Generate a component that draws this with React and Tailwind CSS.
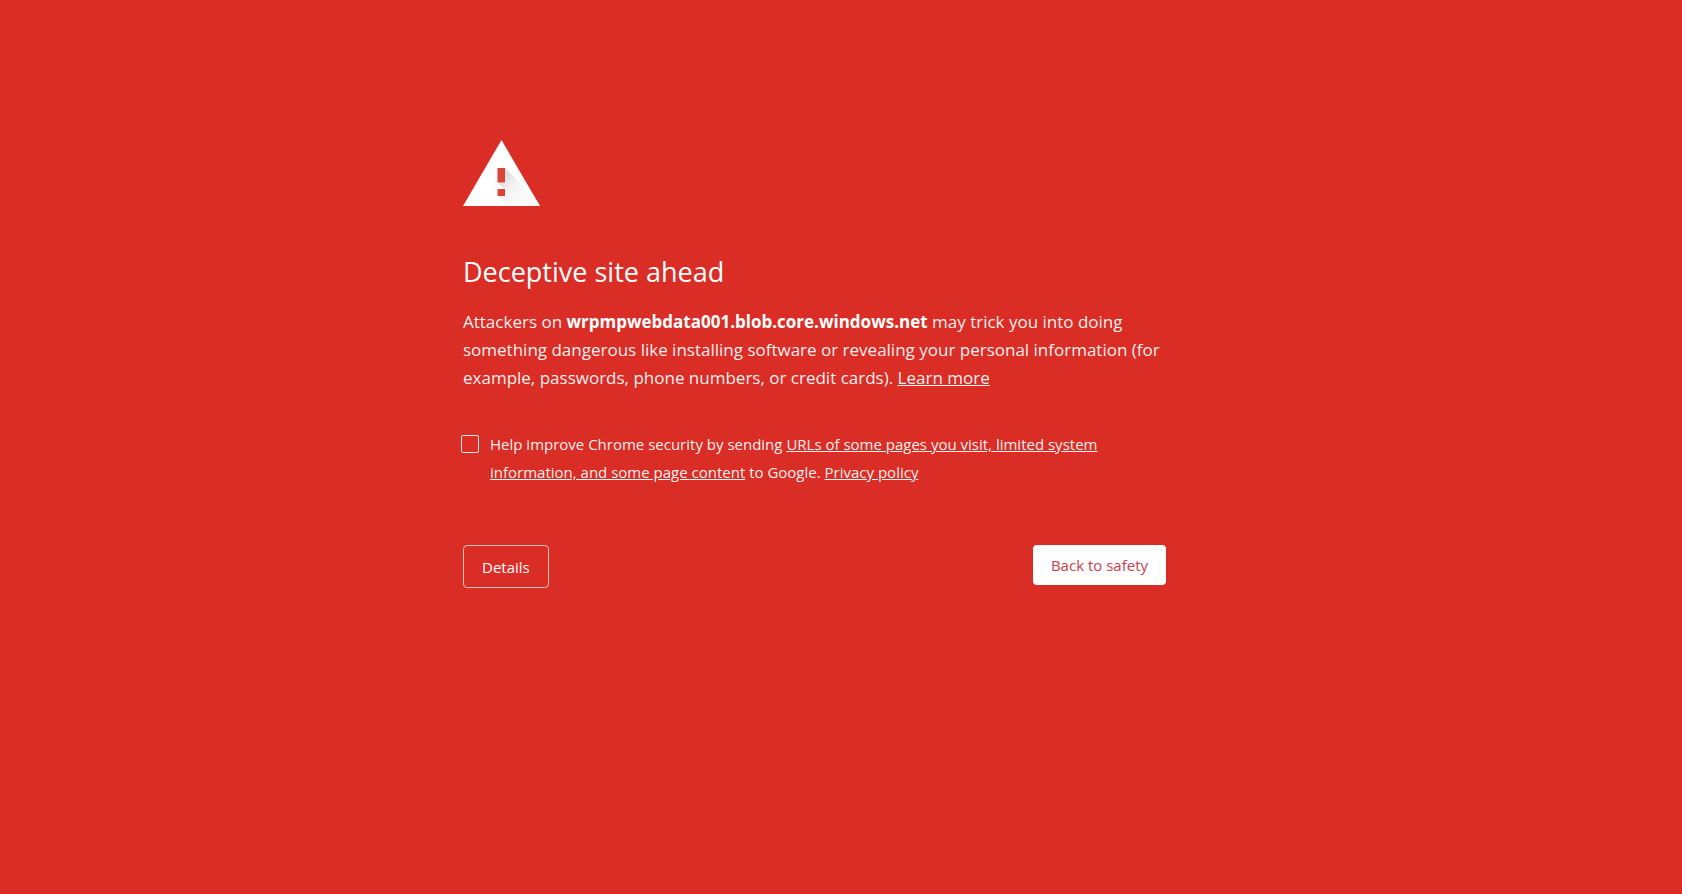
function WarningIcon() {
  return (
    <svg
      className="block h-[66px] w-[77px]"
      viewBox="0 0 77 66"
      aria-hidden="true"
    >
      <defs>
        <linearGradient id="shadow" x1="38" y1="34" x2="58" y2="54" gradientUnits="userSpaceOnUse">
          <stop offset="0" stopColor="#dadada" />
          <stop offset="0.6" stopColor="#f3f3f3" />
          <stop offset="1" stopColor="#fafafa" />
        </linearGradient>
      </defs>
      <path d="M38.5 0 77 66H0z" fill="#fff" />
      <path
        d="M42 28 72 58 77 66H44.500L34.500 56H42V49H41L34.500 42.500H42z"
        fill="url(#shadow)"
      />
      <path d="M34.500 28H42v14.500h-7.500zM34.500 49H42v7h-7.500z" fill="#db4437" />
    </svg>
  );
}

export default function App() {
  return (
    <div className="min-h-screen bg-[#da2d26] font-['Open_Sans','Noto_Sans',sans-serif] text-white">
      <main className="mx-auto max-w-[756px] pt-[140px] pr-[53px]">
        <WarningIcon />

        <h1 className="mt-12 text-[27px] leading-9">
          Deceptive site ahead
        </h1>

        <p className="mt-[18px] text-[17px] leading-7 text-white/95">
          Attackers on{" "}
          <strong className="font-bold text-white">
            wrpmpwebdata001.blob.core.windows.net
          </strong>{" "}
          may trick you into doing something dangerous like installing software
          or revealing your personal information (for example, passwords, phone
          numbers, or credit cards).{" "}
          <a href="#learn-more" className="underline">
            Learn more
          </a>
        </p>

        {/* REPORTING OPT-IN */}
        <div className="mt-[38px] flex gap-[11px] pr-[60px]">
          <input
            id="opt-in"
            type="checkbox"
            className="mt-[5px] -ml-0.5 size-[18px] shrink-0 appearance-none rounded-xs border border-white/90 checked:bg-white"
          />
          <label htmlFor="opt-in" className="text-[15px] leading-7 text-white/95">
            Help improve Chrome security by sending{" "}
            <a href="#whitepaper" className="underline">
              URLs of some pages you visit, limited system information, and some
              page content
            </a>{" "}
            to Google.{" "}
            <a href="#privacy" className="underline">
              Privacy policy
            </a>
          </label>
        </div>

        {/* BUTTONS */}
        <div className="mt-[59px] flex items-start justify-between text-[15px]">
          <button
            type="button"
            className="h-[43px] rounded border border-white/70 px-[18px] pt-0.5"
          >
            Details
          </button>
          <button
            type="button"
            className="h-10 rounded bg-white px-[18px] text-[#c8414b]"
          >
            Back to safety
          </button>
        </div>
      </main>
    </div>
  );
}
